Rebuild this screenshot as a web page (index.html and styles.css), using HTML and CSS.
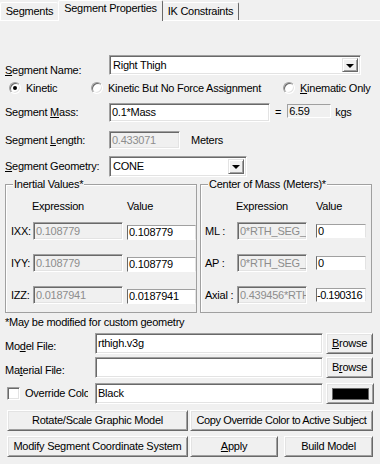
FILE: index.html
```html
<!DOCTYPE html>
<html lang="en">
<head>
  <meta charset="UTF-8" />
  <title>Segment Properties</title>
  <link rel="stylesheet" href="styles.css">
</head>
<body>
  <div class="tabs">
    <div class="tab tab-seg">Segments</div>
    <div class="tab tab-props active">Segment Properties</div>
    <div class="tab tab-ik">IK Constraints</div>
  </div>

  <div class="panel">
    <!-- Name -->
    <div class="row row-name">
      <span class="lbl lbl-low"><u>S</u>egment Name:</span>
      <div class="combo combo-name">
        <span class="combo-text">Right Thigh</span>
        <span class="drop"><span class="arrow"></span></span>
      </div>
    </div>

    <!-- Mode -->
    <div class="row row-radio">
      <span class="opt opt-kinetic"><span class="radio checked"></span>Kinetic</span>
      <span class="opt opt-noforce"><span class="radio"></span>Kinetic But No Force Assignment</span>
      <span class="opt"><span class="radio"></span><u>K</u>inematic Only</span>
    </div>

    <!-- Mass -->
    <div class="row row-mass">
      <span class="lbl">Segment <u>M</u>ass:</span>
      <div class="edit edit-mass">0.1*Mass</div>
      <span class="eq">=</span>
      <div class="static-box">6.59</div>
      <span class="unit">kgs</span>
    </div>

    <!-- Length -->
    <div class="row row-length">
      <span class="lbl">Segment <u>L</u>ength:</span>
      <div class="edit readonly edit-length">0.433071</div>
      <span class="unit-m">Meters</span>
    </div>

    <!-- Geometry -->
    <div class="row row-geom">
      <span class="lbl"><u>S</u>egment Geometry:</span>
      <div class="combo combo-geom">
        <span class="combo-text">CONE</span>
        <span class="drop"><span class="arrow"></span></span>
      </div>
    </div>

    <div class="groups">
      <div class="group group-inertial">
        <span class="caption">Inertial Values*</span>
        <div class="ghead">
          <span class="glbl"></span>
          <span class="gexpr">Expression</span>
          <span class="gval-head">Value</span>
        </div>
        <div class="grow">
          <span class="glbl">IXX:</span>
          <div class="edit readonly gexpr">0.108779</div>
          <div class="val">0.108779</div>
        </div>
        <div class="grow">
          <span class="glbl">IYY:</span>
          <div class="edit readonly gexpr">0.108779</div>
          <div class="val">0.108779</div>
        </div>
        <div class="grow">
          <span class="glbl">IZZ:</span>
          <div class="edit readonly gexpr">0.0187941</div>
          <div class="val">0.0187941</div>
        </div>
      </div>

      <div class="group group-com">
        <span class="caption">Center of Mass (Meters)*</span>
        <div class="ghead">
          <span class="glbl"></span>
          <span class="gexpr">Expression</span>
          <span class="gval-head">Value</span>
        </div>
        <div class="grow">
          <span class="glbl">ML :</span>
          <div class="edit readonly gexpr">0*RTH_SEG_</div>
          <div class="val">0</div>
        </div>
        <div class="grow">
          <span class="glbl">AP :</span>
          <div class="edit readonly gexpr">0*RTH_SEG_</div>
          <div class="val">0</div>
        </div>
        <div class="grow">
          <span class="glbl">Axial :</span>
          <div class="edit readonly gexpr">0.439456*RTH</div>
          <div class="val val-tight">-0.190316</div>
        </div>
      </div>
    </div>

    <div class="note">*May be modified for custom geometry</div>

    <!-- Files -->
    <div class="row row-file">
      <span class="flbl">Mo<u>d</u>el File:</span>
      <div class="edit edit-file">rthigh.v3g</div>
      <button class="btn btn-browse"><u>B</u>rowse</button>
    </div>
    <div class="row row-file row-material">
      <span class="flbl">Ma<u>t</u>erial File:</span>
      <div class="edit edit-file"></div>
      <button class="btn btn-browse">B<u>r</u>owse</button>
    </div>
    <div class="row row-file row-color">
      <span class="check-label"><span class="check"></span>Override Color</span>
      <div class="edit edit-file">Black</div>
      <button class="btn btn-swatch"><span class="swatch"></span></button>
    </div>

    <!-- Actions -->
    <div class="row row-btns">
      <button class="btn btn-left">Rotate/Scale Graphic Model</button>
      <button class="btn btn-copy">Copy Override Color to Active Subject</button>
    </div>
    <div class="row row-btns row-btns2">
      <button class="btn btn-left">Modify Segment Coordinate System</button>
      <button class="btn btn-apply"><u>A</u>pply</button>
      <button class="btn btn-build">Build Model</button>
    </div>
  </div>
</body>
</html>
```

FILE: styles.css
```css
* {
  box-sizing: border-box;
}

body {
  margin: 0;
  width: 380px;
  height: 464px;
  overflow: hidden;
  background: #f0f0f0;
  font-family: 'Liberation Sans', Arial, sans-serif;
  font-size: 11px;
  line-height: 13px;
  letter-spacing: -0.25px;
  color: #000;
}

u {
  text-decoration: underline;
}

/* Tabs */
.tabs {
  display: flex;
  align-items: flex-end;
  height: 21px;
  box-shadow: inset 0 -1px 0 #fff;
}

.tab {
  height: 18px;
  margin-bottom: 1px;
  padding-top: 2px;
  text-align: center;
  white-space: nowrap;
  border: 1px solid;
  border-bottom: none;
  border-color: #fff #696969 transparent #fff;
  border-radius: 2px 2px 0 0;
}

.tab-seg {
  width: 58px;
  border-right: none;
}

.tab-props {
  width: 105px;
}

.tab-ik {
  width: 76px;
  border-left: none;
}

.tab.active {
  height: 21px;
  margin-bottom: 0;
  padding-top: 1px;
  background: #f0f0f0;
}

/* Panel */
.panel {
  padding-left: 5px;
}

.row {
  display: flex;
  align-items: center;
}

.lbl {
  width: 104px;
  flex-shrink: 0;
  white-space: nowrap;
}

.lbl-low {
  align-self: flex-end;
  margin-bottom: -2px;
}

.row-name {
  margin-top: 34px;
  height: 20px;
}

.row-radio {
  margin-top: 6px;
  height: 14px;
}

.row-mass {
  margin-top: 8px;
  height: 19px;
}

.row-length {
  margin-top: 9px;
  height: 18px;
}

.row-geom {
  margin-top: 7px;
  height: 21px;
}

/* Sunken edit fields */
.edit,
.combo {
  height: 100%;
  background: #fff;
  border: 1px solid;
  border-color: #a0a0a0 #fff #fff #a0a0a0;
  box-shadow: inset 1px 1px 0 #696969, inset -1px -1px 0 #e3e3e3;
  padding: 0 2px;
  white-space: nowrap;
  overflow: hidden;
  display: flex;
  align-items: center;
}

.edit.readonly {
  background: #f0f0f0;
  color: #8d8d8d;
}

.edit-mass {
  width: 161px;
}

.edit-length {
  width: 71px;
}

.combo {
  justify-content: space-between;
  padding: 2px;
}

.combo-text {
  padding-left: 1px;
}

.combo-name {
  width: 252px;
}

.combo-geom {
  width: 138px;
}

.drop {
  width: 16px;
  height: 100%;
  background: #f0f0f0;
  border: 1px solid;
  border-color: #e3e3e3 #696969 #696969 #e3e3e3;
  box-shadow: inset 1px 1px 0 #fff, inset -1px -1px 0 #a0a0a0;
  display: flex;
  align-items: center;
  justify-content: center;
}

.arrow {
  width: 0;
  height: 0;
  margin-top: 1px;
  border-left: 4px solid transparent;
  border-right: 4px solid transparent;
  border-top: 4px solid #000;
}

/* Radios */
.opt {
  display: flex;
  align-items: center;
  white-space: nowrap;
}

.opt-kinetic {
  width: 82px;
  margin-left: 4px;
}

.opt-noforce {
  width: 192px;
}

.radio {
  width: 12px;
  height: 12px;
  margin-right: 5px;
  border-radius: 50%;
  background: #fff;
  border: 1px solid;
  border-color: #a0a0a0 #fff #fff #a0a0a0;
  box-shadow: inset 1px 1px 0 #696969, inset -1px -1px 0 #e3e3e3;
  display: flex;
  align-items: center;
  justify-content: center;
}

.radio.checked::after {
  content: '';
  width: 4px;
  height: 4px;
  border-radius: 50%;
  background: #000;
}

/* Mass extras */
.eq {
  margin-left: 5px;
}

.static-box {
  width: 44px;
  height: 14px;
  margin-left: 6px;
  align-self: flex-start;
  margin-top: 1px;
  padding-left: 1px;
  border: 1px solid;
  border-color: #a0a0a0 #fff #fff #a0a0a0;
  display: flex;
  align-items: center;
}

.unit {
  margin-left: 4px;
}

.unit-m {
  margin-left: 11px;
}

/* Group boxes */
.groups {
  display: flex;
  margin-top: 7px;
  height: 129px;
}

.group {
  position: relative;
  height: 100%;
  border: 1px solid #a0a0a0;
  box-shadow: inset 1px 1px 0 #fff;
  padding-top: 14px;
}

.group-inertial {
  width: 192px;
  padding-left: 5px;
}

.group-com {
  width: 172px;
  margin-left: 3px;
  padding-left: 4px;
}

.caption {
  position: absolute;
  top: -7px;
  left: 7px;
  padding: 0 1px;
  background: #f0f0f0;
  white-space: nowrap;
}

.ghead {
  display: flex;
  height: 14px;
  margin-bottom: 9px;
  align-items: center;
}

.grow {
  display: flex;
  height: 18px;
  margin-bottom: 14px;
  align-items: center;
}

.glbl {
  flex-shrink: 0;
  white-space: nowrap;
}

.gexpr {
  flex-shrink: 0;
}

.val {
  height: 15px;
  align-self: flex-end;
  background: #fff;
  padding-left: 1px;
  border: 1px solid;
  border-color: #a0a0a0 #e3e3e3 #fff #696969;
  display: flex;
  align-items: center;
  white-space: nowrap;
  overflow: hidden;
}

.group-inertial .glbl {
  width: 22px;
}

.group-inertial .gexpr {
  width: 90px;
  margin-right: 4px;
}

.group-inertial .ghead .gexpr {
  margin-left: -1px;
  margin-right: 5px;
}

.group-inertial .val {
  width: 69px;
}

.group-com .glbl {
  width: 32px;
}

.group-com .gexpr {
  width: 70px;
  margin-right: 9px;
}

.group-com .ghead .gexpr {
  margin-left: -1px;
  margin-right: 10px;
}

.group-com .val {
  width: 50px;
  height: 14px;
  margin-bottom: 2px;
}

.group-com .val-tight {
  padding-left: 0;
  letter-spacing: -0.5px;
}

.note {
  margin-top: 2px;
  height: 14px;
  line-height: 14px;
  white-space: nowrap;
}

/* File rows */
.row-file {
  margin-top: 4px;
  height: 21px;
}

.row-material {
  margin-top: 3px;
}

.row-color {
  margin-top: 5px;
}

.flbl {
  width: 90px;
  flex-shrink: 0;
  padding-top: 5px;
  white-space: nowrap;
}

.edit-file {
  width: 228px;
  padding-left: 2px;
}

.row-file .btn {
  margin-left: 3px;
}

.check-label {
  width: 83px;
  margin-right: 7px;
  flex-shrink: 0;
  display: flex;
  align-items: center;
  overflow: hidden;
  white-space: nowrap;
}

.check {
  width: 13px;
  height: 13px;
  flex-shrink: 0;
  margin-left: 2px;
  margin-right: 5px;
  background: #fff;
  border: 1px solid;
  border-color: #a0a0a0 #fff #fff #a0a0a0;
  box-shadow: inset 1px 1px 0 #696969, inset -1px -1px 0 #e3e3e3;
}

/* Buttons */
.btn {
  height: 100%;
  margin: 0;
  padding: 0;
  font: inherit;
  letter-spacing: inherit;
  color: #000;
  background: #f0f0f0;
  border: 1px solid;
  border-color: #fff #696969 #696969 #fff;
  box-shadow: inset 1px 1px 0 #e3e3e3, inset -1px -1px 0 #a0a0a0;
  white-space: nowrap;
  text-align: center;
}

.btn-browse {
  width: 47px;
}

.btn-swatch {
  width: 48px;
  display: flex;
  align-items: center;
  justify-content: center;
  padding-left: 1px;
}

.swatch {
  width: 37px;
  height: 12px;
  background: #000;
  border: 1px solid #696969;
}

.row-btns {
  margin-top: 6px;
  margin-left: 2px;
  height: 21px;
}

.row-btns2 {
  margin-top: 5px;
}

.btn-left {
  width: 181px;
  margin-right: 2px;
}

.btn-copy {
  width: 183px;
  letter-spacing: -0.4px;
}

.btn-apply {
  width: 88px;
  margin-right: 6px;
}

.btn-build {
  width: 89px;
}
```
